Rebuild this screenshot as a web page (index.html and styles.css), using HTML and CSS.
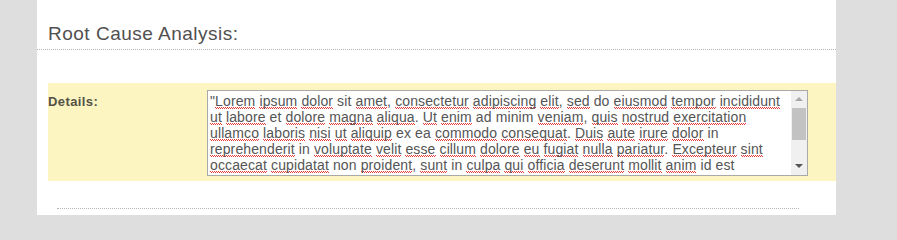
FILE: index.html
```html
<!DOCTYPE html>
<html>
<head>
<meta charset="utf-8">
<link rel="stylesheet" href="styles.css">
</head>
<body>
<div class="panel">
  <h2 class="title">Root Cause Analysis:</h2>
  <div class="field">
    <div class="label">Details:</div>
    <div class="box">
      <div class="text">
        <div class="ln">"<s>Lorem</s> <s>ipsum</s> <s>dolor</s> sit <s>amet</s>, <s>consectetur</s> <s>adipiscing</s> <s>elit</s>, <s>sed</s> do <s>eiusmod</s> <s>tempor</s> <s>incididunt</s></div>
        <div class="ln"><s>ut</s> <s>labore</s> et <s>dolore</s> <s>magna</s> <s>aliqua</s>. <s>Ut</s> <s>enim</s> ad minim <s>veniam</s>, <s>quis</s> <s>nostrud</s> <s>exercitation</s></div>
        <div class="ln"><s>ullamco</s> <s>laboris</s> <s>nisi</s> <s>ut</s> <s>aliquip</s> ex ea <s>commodo</s> <s>consequat</s>. <s>Duis</s> <s>aute</s> <s>irure</s> <s>dolor</s> in</div>
        <div class="ln"><s>reprehenderit</s> in <s>voluptate</s> <s>velit</s> <s>esse</s> <s>cillum</s> <s>dolore</s> <s>eu</s> <s>fugiat</s> <s>nulla</s> <s>pariatur</s>. <s>Excepteur</s> <s>sint</s></div>
        <div class="ln"><s>occaecat</s> <s>cupidatat</s> non <s>proident</s>, <s>sunt</s> in <s>culpa</s> <s>qui</s> <s>officia</s> <s>deserunt</s> <s>mollit</s> <s>anim</s> id est</div>
      </div>
      <div class="sb">
        <div class="arrow up"></div>
        <div class="track"><div class="thumb"></div></div>
        <div class="arrow down"></div>
      </div>
    </div>
  </div>
  <div class="sep"></div>
</div>
</body>
</html>
```

FILE: styles.css
```css
html, body {
  margin: 0;
  padding: 0;
  height: 215px;
  overflow: hidden;
  background: #dedede;
  font-family: "Liberation Sans", Arial, sans-serif;
}
.panel {
  margin-left: 37px;
  width: 799px;
  height: 215px;
  background: #ffffff;
  overflow: hidden;
}
.title {
  margin: 0;
  padding: 23px 11px 4px;
  font-size: 19px;
  letter-spacing: 0.5px;
  line-height: 22px;
  font-weight: normal;
  color: #505050;
  border-bottom: 1px dotted #b4b4b4;
}
.field {
  margin: 33px 0 0 11px;
  height: 98px;
  background: #fcf5c1;
  display: flex;
  align-items: flex-start;
}
.label {
  width: 159px;
  padding-top: 11px;
  font-size: 13px;
  letter-spacing: 0.4px;
  line-height: 15px;
  font-weight: bold;
  color: #555247;
}
.box {
  margin-top: 7px;
  width: 599px;
  height: 84px;
  border: 1px solid #a9a9a9;
  background: #ffffff;
  display: flex;
}
.text {
  flex: 1;
  overflow: hidden;
  padding: 2px 2px 0 2px;
  font-size: 14px;
  letter-spacing: 0.12px;
  line-height: 16px;
  color: #555555;
}
.ln {
  white-space: nowrap;
}
.text s {
  text-decoration: none;
  background-image:
    repeating-linear-gradient(90deg, #e23a3a 0 1px, transparent 1px 2px),
    repeating-linear-gradient(90deg, transparent 0 1px, #e23a3a 1px 2px);
  background-size: 100% 1px, 100% 1px;
  background-position: 0 calc(100% - 1px), 0 100%;
  background-repeat: no-repeat;
}
.sb {
  width: 16px;
  background: #f0f0f0;
  display: flex;
  flex-direction: column;
  align-items: center;
}
.arrow {
  width: 0;
  height: 0;
  border-left: 4px solid transparent;
  border-right: 4px solid transparent;
}
.up {
  margin-top: 6px;
  border-bottom: 4px solid #a8a8a8;
}
.track {
  flex: 1;
  width: 100%;
  display: flex;
  flex-direction: column;
  align-items: center;
  padding-top: 7px;
}
.thumb {
  width: 14px;
  height: 32px;
  background: #c2c2c2;
}
.down {
  margin-bottom: 7px;
  border-top: 4px solid #555555;
}
.sep {
  margin: 27px 0 0 20px;
  width: 742px;
  border-top: 1px dotted #b4b4b4;
}
```
